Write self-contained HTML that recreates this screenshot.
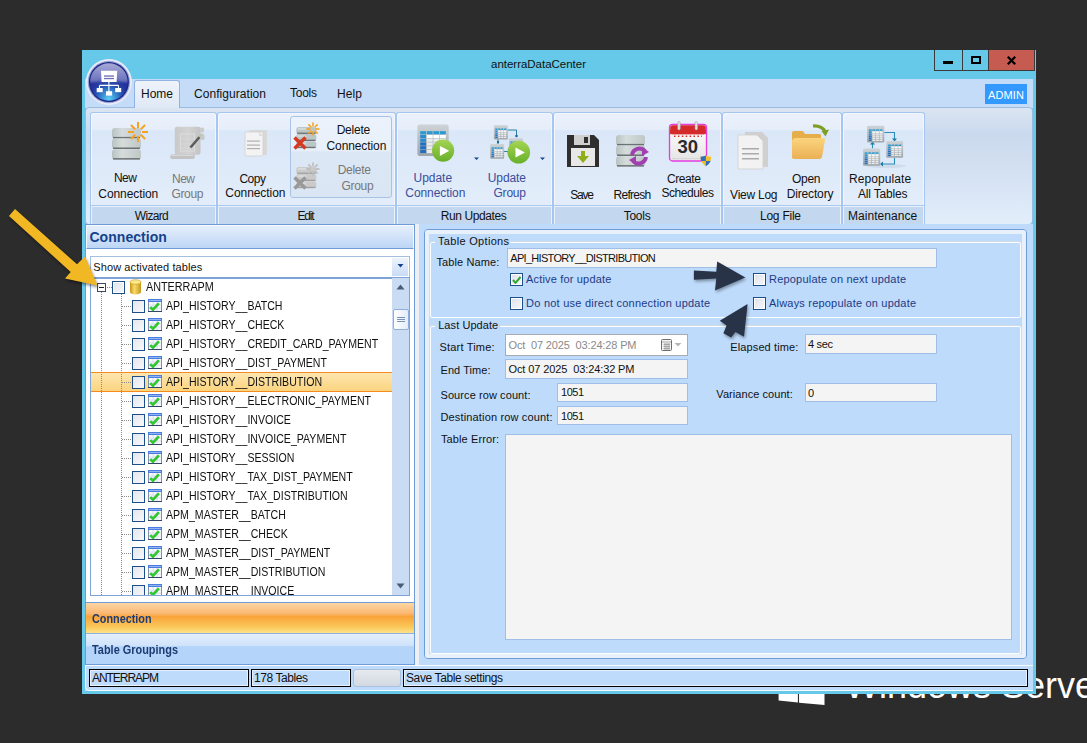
<!DOCTYPE html><html><head><meta charset="utf-8"><style>
html,body{margin:0;padding:0;width:1087px;height:743px;overflow:hidden;background:#2c2c2c;}
body{position:relative;font-family:"Liberation Sans",sans-serif;}
.t{position:absolute;white-space:pre;font-family:"Liberation Sans",sans-serif;}
</style></head><body>
<svg style="position:absolute;left:770px;top:680px;" width="60" height="30" viewBox="0 0 60 30"><polygon points="8.6,0 27.9,0 27.9,22.6 8.6,20.4" fill="#fff"/><polygon points="29,0 54.5,0 54.5,24.9 29,22.8" fill="#fff"/></svg>
<div class="t" style="left:845px;top:668px;font-size:36px;line-height:36px;color:#fff;">Windows Server</div>
<div style="position:absolute;left:82px;top:50px;width:954px;height:644px;background:#66c9e9;"></div>
<div class="t" style="left:491px;top:59px;font-size:11.5px;line-height:11.5px;color:#111;letter-spacing:-0.016px;">anterraDataCenter</div>
<div style="position:absolute;left:934px;top:50px;width:29px;height:21px;background:#66c9e9;border:1px solid #3b3b3b;border-top:none;box-sizing:border-box;"></div>
<div style="position:absolute;left:963px;top:50px;width:26px;height:21px;background:#66c9e9;border:1px solid #3b3b3b;border-top:none;border-left:none;box-sizing:border-box;"></div>
<div style="position:absolute;left:989px;top:50px;width:46px;height:21px;background:#c65c51;border:1px solid #3b3b3b;border-top:none;border-left:none;box-sizing:border-box;"></div>
<div style="position:absolute;left:943px;top:61px;width:10px;height:3px;background:#000;"></div>
<div style="position:absolute;left:971px;top:56px;width:10px;height:8px;border:2px solid #000;box-sizing:border-box;"></div>
<svg style="position:absolute;left:1006px;top:56px;" width="11" height="9" viewBox="0 0 11 9"><path d="M1.8,0.8 L9.2,8.2 M9.2,0.8 L1.8,8.2" stroke="#000" stroke-width="2.3"/></svg>
<div style="position:absolute;left:85px;top:79px;width:948px;height:29px;background:#c4dcf8;"></div>
<div style="position:absolute;left:85px;top:107px;width:948px;height:118px;background:linear-gradient(#dbe5f2 0%,#cad9ed 22%,#d5e2f3 60%,#e3eefb 100%);border:1px solid #9cbbe2;border-radius:4px;box-sizing:border-box;"></div>
<svg style="position:absolute;left:82px;top:52px;" width="56" height="56" viewBox="0 0 56 56"><defs><radialGradient id="og" cx="50%" cy="95%" r="60%"><stop offset="0" stop-color="#5cd0f5"/><stop offset="0.5" stop-color="#2a6ac0"/><stop offset="1" stop-color="#22309a" stop-opacity="0"/></radialGradient>
<linearGradient id="ogt" x1="0" y1="0" x2="0" y2="1"><stop offset="0" stop-color="#a7aad6"/><stop offset="0.45" stop-color="#6d74bd"/><stop offset="0.55" stop-color="#25339c"/><stop offset="1" stop-color="#1f2e96"/></linearGradient></defs>
<circle cx="26.9" cy="30" r="23" fill="#e8ecf7"/>
<circle cx="26.9" cy="30" r="21.2" fill="#9aa3d6"/>
<circle cx="26.9" cy="30" r="20" fill="#1b2585"/>
<circle cx="26.9" cy="30" r="18.8" fill="url(#ogt)"/>
<circle cx="26.9" cy="30" r="18.8" fill="url(#og)"/>
<path d="M19,18.8 H35.2 L34.6,30.1 H19.6 Z" fill="#fff"/>
<rect x="22" y="23.4" width="10" height="1.3" fill="#6d6db8"/><rect x="22" y="25.9" width="10" height="1.3" fill="#6d6db8"/>
<path d="M26.9,30 V39.5 M17.5,33.4 H36.5 M17.5,33.4 V36.5 M36.5,33.4 V36.5" stroke="#fff" stroke-width="1.1" fill="none"/>
<rect x="14.7" y="36" width="6" height="4.2" fill="#fff"/><rect x="33.2" y="36" width="6" height="4.2" fill="#fff"/><rect x="24" y="39.2" width="6.1" height="4.4" fill="#fff"/></svg>
<div style="position:absolute;left:134px;top:80px;width:46px;height:28px;box-sizing:border-box;border:1px solid #8fb2e0;border-bottom:none;border-radius:3px 3px 0 0;background:linear-gradient(#eef3fb,#dfe9f6);"></div>
<div class="t" style="left:141px;top:88px;font-size:12px;line-height:12px;color:#111;">Home</div>
<div class="t" style="left:194px;top:88px;font-size:12px;line-height:12px;color:#111;letter-spacing:0.052px;">Configuration</div>
<div class="t" style="left:290px;top:87px;font-size:12px;line-height:12px;color:#111;letter-spacing:-0.254px;">Tools</div>
<div class="t" style="left:337px;top:88px;font-size:12px;line-height:12px;color:#111;letter-spacing:0.106px;">Help</div>
<div style="position:absolute;left:985px;top:84px;width:42px;height:20px;background:#3399ff;"></div>
<div class="t" style="left:988px;top:90px;font-size:11px;line-height:11px;color:#fff;letter-spacing:0.139px;">ADMIN</div>
<div style="position:absolute;left:90px;top:112px;width:127px;height:112px;box-sizing:border-box;border:1px solid #a4c6f0;border-bottom:none;border-radius:3px 3px 0 0;box-shadow:inset 1px 1px 0 #f3f7fd, inset -1px 0 0 #f3f7fd;background:linear-gradient(#eaf1fc 0px,#e6eefa 16px,#dae7f8 18px,#e3edfa 92px);"></div>
<div style="position:absolute;left:91px;top:205px;width:125px;height:19px;background:#c3d8ef;border-top:1px solid #a9c8f0;box-shadow:inset 1px 1px 0 #e9f1fb, inset -1px 0 0 #e9f1fb;box-sizing:border-box;"></div>
<div class="t" style="left:134.8px;top:210px;font-size:12px;line-height:12px;color:#111;letter-spacing:-0.667px;">Wizard</div>
<div style="position:absolute;left:217px;top:112px;width:179px;height:112px;box-sizing:border-box;border:1px solid #a4c6f0;border-bottom:none;border-radius:3px 3px 0 0;box-shadow:inset 1px 1px 0 #f3f7fd, inset -1px 0 0 #f3f7fd;background:linear-gradient(#eaf1fc 0px,#e6eefa 16px,#dae7f8 18px,#e3edfa 92px);"></div>
<div style="position:absolute;left:218px;top:205px;width:177px;height:19px;background:#c3d8ef;border-top:1px solid #a9c8f0;box-shadow:inset 1px 1px 0 #e9f1fb, inset -1px 0 0 #e9f1fb;box-sizing:border-box;"></div>
<div class="t" style="left:297.5px;top:210px;font-size:12px;line-height:12px;color:#111;letter-spacing:-1.226px;">Edit</div>
<div style="position:absolute;left:396px;top:112px;width:157px;height:112px;box-sizing:border-box;border:1px solid #a4c6f0;border-bottom:none;border-radius:3px 3px 0 0;box-shadow:inset 1px 1px 0 #f3f7fd, inset -1px 0 0 #f3f7fd;background:linear-gradient(#eaf1fc 0px,#e6eefa 16px,#dae7f8 18px,#e3edfa 92px);"></div>
<div style="position:absolute;left:397px;top:205px;width:155px;height:19px;background:#c3d8ef;border-top:1px solid #a9c8f0;box-shadow:inset 1px 1px 0 #e9f1fb, inset -1px 0 0 #e9f1fb;box-sizing:border-box;"></div>
<div class="t" style="left:440.7px;top:210px;font-size:12px;line-height:12px;color:#111;letter-spacing:-0.404px;">Run Updates</div>
<div style="position:absolute;left:553px;top:112px;width:169px;height:112px;box-sizing:border-box;border:1px solid #a4c6f0;border-bottom:none;border-radius:3px 3px 0 0;box-shadow:inset 1px 1px 0 #f3f7fd, inset -1px 0 0 #f3f7fd;background:linear-gradient(#eaf1fc 0px,#e6eefa 16px,#dae7f8 18px,#e3edfa 92px);"></div>
<div style="position:absolute;left:554px;top:205px;width:167px;height:19px;background:#c3d8ef;border-top:1px solid #a9c8f0;box-shadow:inset 1px 1px 0 #e9f1fb, inset -1px 0 0 #e9f1fb;box-sizing:border-box;"></div>
<div class="t" style="left:623.7px;top:210px;font-size:12px;line-height:12px;color:#111;letter-spacing:-0.254px;">Tools</div>
<div style="position:absolute;left:722px;top:112px;width:120px;height:112px;box-sizing:border-box;border:1px solid #a4c6f0;border-bottom:none;border-radius:3px 3px 0 0;box-shadow:inset 1px 1px 0 #f3f7fd, inset -1px 0 0 #f3f7fd;background:linear-gradient(#eaf1fc 0px,#e6eefa 16px,#dae7f8 18px,#e3edfa 92px);"></div>
<div style="position:absolute;left:723px;top:205px;width:118px;height:19px;background:#c3d8ef;border-top:1px solid #a9c8f0;box-shadow:inset 1px 1px 0 #e9f1fb, inset -1px 0 0 #e9f1fb;box-sizing:border-box;"></div>
<div class="t" style="left:760.0px;top:210px;font-size:12px;line-height:12px;color:#111;letter-spacing:-0.242px;">Log File</div>
<div style="position:absolute;left:842px;top:112px;width:83px;height:112px;box-sizing:border-box;border:1px solid #a4c6f0;border-bottom:none;border-radius:3px 3px 0 0;box-shadow:inset 1px 1px 0 #f3f7fd, inset -1px 0 0 #f3f7fd;background:linear-gradient(#eaf1fc 0px,#e6eefa 16px,#dae7f8 18px,#e3edfa 92px);"></div>
<div style="position:absolute;left:843px;top:205px;width:81px;height:19px;background:#c3d8ef;border-top:1px solid #a9c8f0;box-shadow:inset 1px 1px 0 #e9f1fb, inset -1px 0 0 #e9f1fb;box-sizing:border-box;"></div>
<div class="t" style="left:848.1px;top:210px;font-size:12px;line-height:12px;color:#111;letter-spacing:0.028px;">Maintenance</div>
<svg style="position:absolute;left:112px;top:127.5px;" width="29" height="32" viewBox="0 0 29 32"><defs><linearGradient id="dbg1" x1="0" y1="0" x2="1" y2="0"><stop offset="0" stop-color="#b9c2c2"/><stop offset="0.35" stop-color="#d6dcdc"/><stop offset="1" stop-color="#bfc7c7"/></linearGradient></defs><rect x="0" y="0.00" width="29" height="10.4" rx="3" fill="url(#dbg1)"/><rect x="1" y="8.90" width="27" height="1.5" fill="#5a6262" opacity="0.85"/><rect x="0" y="10.60" width="29" height="10.4" rx="3" fill="url(#dbg1)"/><rect x="1" y="19.50" width="27" height="1.5" fill="#5a6262" opacity="0.85"/><rect x="0" y="21.20" width="29" height="10.4" rx="3" fill="url(#dbg1)"/><rect x="1" y="30.10" width="27" height="1.5" fill="#5a6262" opacity="0.85"/></svg>
<svg style="position:absolute;left:126px;top:120px;" width="24" height="24" viewBox="0 0 24 24"><line x1="16.00" y1="12.00" x2="22.00" y2="12.00" stroke="#f7a21b" stroke-width="2"/><line x1="14.83" y1="14.83" x2="19.07" y2="19.07" stroke="#f7a21b" stroke-width="2"/><line x1="12.00" y1="16.00" x2="12.00" y2="22.00" stroke="#f7a21b" stroke-width="2"/><line x1="9.17" y1="14.83" x2="4.93" y2="19.07" stroke="#f7a21b" stroke-width="2"/><line x1="8.00" y1="12.00" x2="2.00" y2="12.00" stroke="#f7a21b" stroke-width="2"/><line x1="9.17" y1="9.17" x2="4.93" y2="4.93" stroke="#f7a21b" stroke-width="2"/><line x1="12.00" y1="8.00" x2="12.00" y2="2.00" stroke="#f7a21b" stroke-width="2"/><line x1="14.83" y1="9.17" x2="19.07" y2="4.93" stroke="#f7a21b" stroke-width="2"/></svg>
<svg style="position:absolute;left:168px;top:124px;" width="40" height="38" viewBox="0 0 40 38"><defs><linearGradient id="ngb" x1="0" y1="0" x2="1" y2="0"><stop offset="0" stop-color="#c9c9c9"/><stop offset="0.5" stop-color="#d3d3d3"/><stop offset="1" stop-color="#c4c4c4"/></linearGradient></defs>
<rect x="6.8" y="2.8" width="25.7" height="28" rx="2" fill="url(#ngb)"/>
<rect x="32" y="3.5" width="4" height="5" rx="1.5" fill="#cbcbcb"/><rect x="32.5" y="10" width="4" height="6" rx="1.5" fill="#c8c8c8"/>
<rect x="2.2" y="30.3" width="24.7" height="4.6" rx="2" fill="#c3c3c3"/><rect x="3" y="30.8" width="22" height="1.2" fill="#d8d8d8"/>
<rect x="12.5" y="10" width="14" height="17" fill="none" stroke="#dcdcdc" stroke-width="1"/><path d="M13,15 H26 M13,20 H26 M13,24 H26" stroke="#d8d8d8" stroke-width="1"/>
<path d="M22.5,23.5 L31.5,13" stroke="#5c5c5c" stroke-width="2.6"/><path d="M31.5,13 L34,10" stroke="#b9c9b0" stroke-width="2.4"/></svg>
<div class="t" style="left:113.9px;top:172px;font-size:12px;line-height:12px;color:#111;letter-spacing:-0.503px;">New</div>
<div class="t" style="left:98.3px;top:187.6px;font-size:12px;line-height:12px;color:#111;letter-spacing:-0.079px;">Connection</div>
<div class="t" style="left:172px;top:172.8px;font-size:12px;line-height:12px;color:#777;letter-spacing:-0.503px;">New</div>
<div class="t" style="left:171.4px;top:187.9px;font-size:12px;line-height:12px;color:#777;letter-spacing:-0.338px;">Group</div>
<svg style="position:absolute;left:244px;top:129px;" width="24" height="28" viewBox="0 0 24 28"><rect x="5" y="1" width="18" height="25" rx="1" fill="#d8d8d8"/>
<rect x="1" y="3" width="18" height="24" rx="1" fill="#f3f3f3" stroke="#d0d0d0" stroke-width="0.8"/>
<rect x="3" y="11.5" width="13" height="1.2" fill="#b0b0b0"/><rect x="3" y="15.5" width="13" height="1.2" fill="#b0b0b0"/><rect x="3" y="19" width="13" height="1.2" fill="#b0b0b0"/><path d="M15,3 L19,7 H15 Z" fill="#dcdcdc"/></svg>
<div class="t" style="left:239.4px;top:172.9px;font-size:12px;line-height:12px;color:#111;letter-spacing:-0.471px;">Copy</div>
<div class="t" style="left:225.3px;top:187.3px;font-size:12px;line-height:12px;color:#111;letter-spacing:-0.057px;">Connection</div>
<div style="position:absolute;left:290px;top:116px;width:102px;height:82px;box-sizing:border-box;border:1px solid #a9c3e6;border-radius:3px;background:linear-gradient(#ebf2fb 0px,#e8f0fa 33px,#dce7f6 35px,#dbe6f5 80px);"></div>
<svg style="position:absolute;left:292px;top:122px;" width="30" height="30" viewBox="0 0 30 30"><rect x="4.3" y="5.00" width="20" height="7" rx="2.5" fill="#bcc6c6"/><rect x="5" y="10.60" width="18.6" height="1.3" fill="#5d6666" opacity="0.85"/><rect x="6" y="6.00" width="8" height="2" fill="#e0e5e5" opacity="0.6"/><rect x="4.3" y="12.10" width="20" height="7" rx="2.5" fill="#bcc6c6"/><rect x="5" y="17.70" width="18.6" height="1.3" fill="#5d6666" opacity="0.85"/><rect x="6" y="13.10" width="8" height="2" fill="#e0e5e5" opacity="0.6"/><rect x="4.3" y="19.20" width="20" height="7" rx="2.5" fill="#bcc6c6"/><rect x="5" y="24.80" width="18.6" height="1.3" fill="#5d6666" opacity="0.85"/><rect x="6" y="20.20" width="8" height="2" fill="#e0e5e5" opacity="0.6"/><line x1="23.50" y1="7.00" x2="27.50" y2="7.00" stroke="#f7a21b" stroke-width="1.6"/><line x1="22.77" y1="8.77" x2="25.60" y2="11.60" stroke="#f7a21b" stroke-width="1.6"/><line x1="21.00" y1="9.50" x2="21.00" y2="13.50" stroke="#f7a21b" stroke-width="1.6"/><line x1="19.23" y1="8.77" x2="16.40" y2="11.60" stroke="#f7a21b" stroke-width="1.6"/><line x1="18.50" y1="7.00" x2="14.50" y2="7.00" stroke="#f7a21b" stroke-width="1.6"/><line x1="19.23" y1="5.23" x2="16.40" y2="2.40" stroke="#f7a21b" stroke-width="1.6"/><line x1="21.00" y1="4.50" x2="21.00" y2="0.50" stroke="#f7a21b" stroke-width="1.6"/><line x1="22.77" y1="5.23" x2="25.60" y2="2.40" stroke="#f7a21b" stroke-width="1.6"/><path d="M2.5,15.5 L13.5,26.5 M13.5,15.5 L2.5,26.5" stroke="#d63a22" stroke-width="3.4"/></svg>
<svg style="position:absolute;left:292px;top:162px;" width="30" height="30" viewBox="0 0 30 30"><rect x="4.3" y="5.00" width="20" height="7" rx="2.5" fill="#cacaca"/><rect x="5" y="10.60" width="18.6" height="1.3" fill="#9a9a9a" opacity="0.85"/><rect x="6" y="6.00" width="8" height="2" fill="#e0e5e5" opacity="0.6"/><rect x="4.3" y="12.10" width="20" height="7" rx="2.5" fill="#cacaca"/><rect x="5" y="17.70" width="18.6" height="1.3" fill="#9a9a9a" opacity="0.85"/><rect x="6" y="13.10" width="8" height="2" fill="#e0e5e5" opacity="0.6"/><rect x="4.3" y="19.20" width="20" height="7" rx="2.5" fill="#cacaca"/><rect x="5" y="24.80" width="18.6" height="1.3" fill="#9a9a9a" opacity="0.85"/><rect x="6" y="20.20" width="8" height="2" fill="#e0e5e5" opacity="0.6"/><line x1="23.50" y1="7.00" x2="27.50" y2="7.00" stroke="#bbb" stroke-width="1.6"/><line x1="22.77" y1="8.77" x2="25.60" y2="11.60" stroke="#bbb" stroke-width="1.6"/><line x1="21.00" y1="9.50" x2="21.00" y2="13.50" stroke="#bbb" stroke-width="1.6"/><line x1="19.23" y1="8.77" x2="16.40" y2="11.60" stroke="#bbb" stroke-width="1.6"/><line x1="18.50" y1="7.00" x2="14.50" y2="7.00" stroke="#bbb" stroke-width="1.6"/><line x1="19.23" y1="5.23" x2="16.40" y2="2.40" stroke="#bbb" stroke-width="1.6"/><line x1="21.00" y1="4.50" x2="21.00" y2="0.50" stroke="#bbb" stroke-width="1.6"/><line x1="22.77" y1="5.23" x2="25.60" y2="2.40" stroke="#bbb" stroke-width="1.6"/><path d="M2.5,15.5 L13.5,26.5 M13.5,15.5 L2.5,26.5" stroke="#999" stroke-width="3.4"/></svg>
<div class="t" style="left:336.7px;top:123.69999999999999px;font-size:12px;line-height:12px;color:#111;letter-spacing:-0.238px;">Delete</div>
<div class="t" style="left:326.5px;top:139.8px;font-size:12px;line-height:12px;color:#111;letter-spacing:-0.101px;">Connection</div>
<div class="t" style="left:337.7px;top:164px;font-size:12px;line-height:12px;color:#777;letter-spacing:-0.278px;">Delete</div>
<div class="t" style="left:341.4px;top:179.7px;font-size:12px;line-height:12px;color:#777;letter-spacing:-0.288px;">Group</div>
<svg style="position:absolute;left:414px;top:120px;" width="50" height="46" viewBox="0 0 50 46"><defs><linearGradient id="tg1" x1="0" y1="0" x2="0" y2="1"><stop offset="0" stop-color="#cdd3d7"/><stop offset="1" stop-color="#9ea6ab"/></linearGradient></defs><rect x="3.4" y="4.6" width="31.3" height="31.3" rx="2.24" fill="url(#tg1)"/><rect x="6.20" y="11.16" width="5.87" height="3.16" fill="#2a9ad0"/><rect x="12.78" y="11.16" width="5.87" height="3.16" fill="#2a9ad0"/><rect x="19.35" y="11.16" width="5.87" height="3.16" fill="#2a9ad0"/><rect x="25.92" y="11.16" width="5.87" height="3.16" fill="#2a9ad0"/><rect x="6.20" y="14.92" width="5.87" height="3.16" fill="#2a8ccc"/><rect x="12.78" y="14.92" width="5.87" height="3.16" fill="#ffffff"/><rect x="19.35" y="14.92" width="5.87" height="3.16" fill="#ffffff"/><rect x="25.92" y="14.92" width="5.87" height="3.16" fill="#ffffff"/><rect x="6.20" y="18.67" width="5.87" height="3.16" fill="#2a8ccc"/><rect x="12.78" y="18.67" width="5.87" height="3.16" fill="#e9ebec"/><rect x="19.35" y="18.67" width="5.87" height="3.16" fill="#e9ebec"/><rect x="25.92" y="18.67" width="5.87" height="3.16" fill="#e9ebec"/><rect x="6.20" y="22.43" width="5.87" height="3.16" fill="#1f6fc2"/><rect x="12.78" y="22.43" width="5.87" height="3.16" fill="#e9ebec"/><rect x="19.35" y="22.43" width="5.87" height="3.16" fill="#e9ebec"/><rect x="25.92" y="22.43" width="5.87" height="3.16" fill="#e9ebec"/><rect x="6.20" y="26.18" width="5.87" height="3.16" fill="#1f6fc2"/><rect x="12.78" y="26.18" width="5.87" height="3.16" fill="#e9ebec"/><rect x="19.35" y="26.18" width="5.87" height="3.16" fill="#e9ebec"/><rect x="25.92" y="26.18" width="5.87" height="3.16" fill="#e9ebec"/><rect x="6.20" y="29.94" width="5.87" height="3.16" fill="#1f6fc2"/><rect x="12.78" y="29.94" width="5.87" height="3.16" fill="#e9ebec"/><rect x="19.35" y="29.94" width="5.87" height="3.16" fill="#e9ebec"/><rect x="25.92" y="29.94" width="5.87" height="3.16" fill="#e9ebec"/><defs><linearGradient id="pg1" x1="0" y1="0" x2="0" y2="1"><stop offset="0" stop-color="#a3d452"/><stop offset="1" stop-color="#68b02a"/></linearGradient></defs><circle cx="29.1" cy="30.6" r="11.1" fill="url(#pg1)"/><polygon points="25.900000000000002,26.0 35.300000000000004,30.8 25.900000000000002,35.9" fill="#fff"/></svg>
<svg style="position:absolute;left:470px;top:156px;" width="12" height="6" viewBox="0 0 12 6"><polygon points="4,1.5 9,1.5 6.5,4" fill="#15428b"/></svg>
<svg style="position:absolute;left:484px;top:120px;" width="50" height="46" viewBox="0 0 50 46"><path d="M23,10 H32.5 V16 M14,19 V24 M20,31.5 H26" stroke="#2b7fa6" stroke-width="1" fill="none"/><circle cx="32.5" cy="16" r="1.3" fill="#1d6c8e"/><circle cx="14" cy="22" r="1.2" fill="#1d6c8e"/><defs><linearGradient id="tg2" x1="0" y1="0" x2="0" y2="1"><stop offset="0" stop-color="#cdd3d7"/><stop offset="1" stop-color="#9ea6ab"/></linearGradient></defs><rect x="9.9" y="5.3" width="13.9" height="14.2" rx="1.00" fill="url(#tg2)"/><rect x="11.31" y="8.44" width="2.22" height="1.44" fill="#2a9ad0"/><rect x="14.23" y="8.44" width="2.22" height="1.44" fill="#2a9ad0"/><rect x="17.15" y="8.44" width="2.22" height="1.44" fill="#2a9ad0"/><rect x="20.07" y="8.44" width="2.22" height="1.44" fill="#2a9ad0"/><rect x="11.31" y="10.48" width="2.22" height="1.44" fill="#2a8ccc"/><rect x="14.23" y="10.48" width="2.22" height="1.44" fill="#ffffff"/><rect x="17.15" y="10.48" width="2.22" height="1.44" fill="#ffffff"/><rect x="20.07" y="10.48" width="2.22" height="1.44" fill="#ffffff"/><rect x="11.31" y="12.53" width="2.22" height="1.44" fill="#2a8ccc"/><rect x="14.23" y="12.53" width="2.22" height="1.44" fill="#e9ebec"/><rect x="17.15" y="12.53" width="2.22" height="1.44" fill="#e9ebec"/><rect x="20.07" y="12.53" width="2.22" height="1.44" fill="#e9ebec"/><rect x="11.31" y="14.57" width="2.22" height="1.44" fill="#1f6fc2"/><rect x="14.23" y="14.57" width="2.22" height="1.44" fill="#e9ebec"/><rect x="17.15" y="14.57" width="2.22" height="1.44" fill="#e9ebec"/><rect x="20.07" y="14.57" width="2.22" height="1.44" fill="#e9ebec"/><rect x="11.31" y="16.62" width="2.22" height="1.44" fill="#1f6fc2"/><rect x="14.23" y="16.62" width="2.22" height="1.44" fill="#e9ebec"/><rect x="17.15" y="16.62" width="2.22" height="1.44" fill="#e9ebec"/><rect x="20.07" y="16.62" width="2.22" height="1.44" fill="#e9ebec"/><defs><linearGradient id="tg3" x1="0" y1="0" x2="0" y2="1"><stop offset="0" stop-color="#cdd3d7"/><stop offset="1" stop-color="#9ea6ab"/></linearGradient></defs><rect x="6.2" y="24.1" width="13.9" height="14.6" rx="1.00" fill="url(#tg3)"/><rect x="7.61" y="27.32" width="2.22" height="1.50" fill="#2a9ad0"/><rect x="10.53" y="27.32" width="2.22" height="1.50" fill="#2a9ad0"/><rect x="13.45" y="27.32" width="2.22" height="1.50" fill="#2a9ad0"/><rect x="16.37" y="27.32" width="2.22" height="1.50" fill="#2a9ad0"/><rect x="7.61" y="29.42" width="2.22" height="1.50" fill="#2a8ccc"/><rect x="10.53" y="29.42" width="2.22" height="1.50" fill="#ffffff"/><rect x="13.45" y="29.42" width="2.22" height="1.50" fill="#ffffff"/><rect x="16.37" y="29.42" width="2.22" height="1.50" fill="#ffffff"/><rect x="7.61" y="31.52" width="2.22" height="1.50" fill="#2a8ccc"/><rect x="10.53" y="31.52" width="2.22" height="1.50" fill="#e9ebec"/><rect x="13.45" y="31.52" width="2.22" height="1.50" fill="#e9ebec"/><rect x="16.37" y="31.52" width="2.22" height="1.50" fill="#e9ebec"/><rect x="7.61" y="33.63" width="2.22" height="1.50" fill="#1f6fc2"/><rect x="10.53" y="33.63" width="2.22" height="1.50" fill="#e9ebec"/><rect x="13.45" y="33.63" width="2.22" height="1.50" fill="#e9ebec"/><rect x="16.37" y="33.63" width="2.22" height="1.50" fill="#e9ebec"/><rect x="7.61" y="35.73" width="2.22" height="1.50" fill="#1f6fc2"/><rect x="10.53" y="35.73" width="2.22" height="1.50" fill="#e9ebec"/><rect x="13.45" y="35.73" width="2.22" height="1.50" fill="#e9ebec"/><rect x="16.37" y="35.73" width="2.22" height="1.50" fill="#e9ebec"/><defs><linearGradient id="tg4" x1="0" y1="0" x2="0" y2="1"><stop offset="0" stop-color="#cdd3d7"/><stop offset="1" stop-color="#9ea6ab"/></linearGradient></defs><rect x="25" y="18.3" width="14" height="14" rx="1.00" fill="url(#tg4)"/><rect x="26.42" y="21.40" width="2.24" height="1.42" fill="#2a9ad0"/><rect x="29.36" y="21.40" width="2.24" height="1.42" fill="#2a9ad0"/><rect x="32.30" y="21.40" width="2.24" height="1.42" fill="#2a9ad0"/><rect x="35.24" y="21.40" width="2.24" height="1.42" fill="#2a9ad0"/><rect x="26.42" y="23.42" width="2.24" height="1.42" fill="#2a8ccc"/><rect x="29.36" y="23.42" width="2.24" height="1.42" fill="#ffffff"/><rect x="32.30" y="23.42" width="2.24" height="1.42" fill="#ffffff"/><rect x="35.24" y="23.42" width="2.24" height="1.42" fill="#ffffff"/><rect x="26.42" y="25.43" width="2.24" height="1.42" fill="#2a8ccc"/><rect x="29.36" y="25.43" width="2.24" height="1.42" fill="#e9ebec"/><rect x="32.30" y="25.43" width="2.24" height="1.42" fill="#e9ebec"/><rect x="35.24" y="25.43" width="2.24" height="1.42" fill="#e9ebec"/><rect x="26.42" y="27.45" width="2.24" height="1.42" fill="#1f6fc2"/><rect x="29.36" y="27.45" width="2.24" height="1.42" fill="#e9ebec"/><rect x="32.30" y="27.45" width="2.24" height="1.42" fill="#e9ebec"/><rect x="35.24" y="27.45" width="2.24" height="1.42" fill="#e9ebec"/><rect x="26.42" y="29.46" width="2.24" height="1.42" fill="#1f6fc2"/><rect x="29.36" y="29.46" width="2.24" height="1.42" fill="#e9ebec"/><rect x="32.30" y="29.46" width="2.24" height="1.42" fill="#e9ebec"/><rect x="35.24" y="29.46" width="2.24" height="1.42" fill="#e9ebec"/><defs><linearGradient id="pg2" x1="0" y1="0" x2="0" y2="1"><stop offset="0" stop-color="#a3d452"/><stop offset="1" stop-color="#68b02a"/></linearGradient></defs><circle cx="34.7" cy="32.2" r="11.4" fill="url(#pg2)"/><polygon points="31.500000000000004,27.6 40.900000000000006,32.400000000000006 31.500000000000004,37.5" fill="#fff"/></svg>
<svg style="position:absolute;left:537px;top:156px;" width="12" height="6" viewBox="0 0 12 6"><polygon points="3,1.5 8,1.5 5.5,4" fill="#15428b"/></svg>
<div class="t" style="left:413.5px;top:171.9px;font-size:12px;line-height:12px;color:#3a4d9b;letter-spacing:-0.019px;">Update</div>
<div class="t" style="left:405.3px;top:186.7px;font-size:12px;line-height:12px;color:#3a4d9b;letter-spacing:-0.068px;">Connection</div>
<div class="t" style="left:487.8px;top:171.9px;font-size:12px;line-height:12px;color:#3a4d9b;letter-spacing:-0.099px;">Update</div>
<div class="t" style="left:493.5px;top:186.7px;font-size:12px;line-height:12px;color:#3a4d9b;letter-spacing:-0.213px;">Group</div>
<svg style="position:absolute;left:566px;top:134px;" width="34" height="34" viewBox="0 0 34 34"><path d="M1,1 H28 L33,6 V33 H1 Z" fill="#2f2f2f"/>
<rect x="8" y="1" width="16" height="10" fill="#cfcfcf"/><rect x="18" y="3" width="4" height="6" fill="#2f2f2f"/>
<rect x="5" y="14" width="24" height="18" fill="#e8e8e8"/>
<path d="M15,17 H19 V22 H23 L17,29 L11,22 H15 Z" fill="#8fae1b"/></svg>
<svg style="position:absolute;left:616px;top:135px;" width="29" height="32" viewBox="0 0 29 32"><defs><linearGradient id="dbg2" x1="0" y1="0" x2="1" y2="0"><stop offset="0" stop-color="#b9c2c2"/><stop offset="0.35" stop-color="#d6dcdc"/><stop offset="1" stop-color="#bfc7c7"/></linearGradient></defs><rect x="0" y="0.00" width="29" height="10.4" rx="3" fill="url(#dbg2)"/><rect x="1" y="8.90" width="27" height="1.5" fill="#5a6262" opacity="0.85"/><rect x="0" y="10.60" width="29" height="10.4" rx="3" fill="url(#dbg2)"/><rect x="1" y="19.50" width="27" height="1.5" fill="#5a6262" opacity="0.85"/><rect x="0" y="21.20" width="29" height="10.4" rx="3" fill="url(#dbg2)"/><rect x="1" y="30.10" width="27" height="1.5" fill="#5a6262" opacity="0.85"/></svg>
<svg style="position:absolute;left:628px;top:145px;" width="22" height="22" viewBox="0 0 22 22"><path d="M4,10 A7.5,7.5 0 0 1 17,6" stroke="#a140b0" stroke-width="4" fill="none"/><polygon points="14,2 21,7 14,11" fill="#a140b0"/>
<path d="M18,12 A7.5,7.5 0 0 1 5,16" stroke="#a140b0" stroke-width="4" fill="none"/><polygon points="8,20 1,15 8,11" fill="#a140b0"/></svg>
<svg style="position:absolute;left:668px;top:121px;" width="45" height="46" viewBox="0 0 45 46"><defs><linearGradient id="calb" x1="0" y1="0" x2="0" y2="1"><stop offset="0" stop-color="#ffffff"/><stop offset="1" stop-color="#e4e4e4"/></linearGradient></defs>
<rect x="1.5" y="3.5" width="37" height="36.5" rx="3" fill="url(#calb)" stroke="#e53be0" stroke-width="1.3"/>
<rect x="2.2" y="4.2" width="35.6" height="9" rx="2.5" fill="#d42a2a"/><rect x="2.2" y="9" width="35.6" height="4.2" fill="#d42a2a"/>
<line x1="6" y1="15.2" x2="34" y2="15.2" stroke="#d42a2a" stroke-width="1.4" stroke-dasharray="1.5 2.4"/>
<rect x="9.7" y="0.5" width="2.6" height="8.5" rx="1.3" fill="#e2e2e2" stroke="#9a9a9a" stroke-width="0.5"/><rect x="27" y="0.5" width="2.6" height="8.5" rx="1.3" fill="#e2e2e2" stroke="#9a9a9a" stroke-width="0.5"/>
<text x="19.8" y="32.2" font-family="Liberation Sans" font-weight="bold" font-size="18.5" text-anchor="middle" fill="#2b2b2b">30</text>
<line x1="4" y1="37.6" x2="36" y2="37.6" stroke="#cfcfcf" stroke-width="0.8"/>
<path d="M37.8,34.6 Q40.5,36 43,35.6 Q43.5,42 37.8,45.2 Q32.1,42 32.6,35.6 Q35.1,36 37.8,34.6 Z" fill="#f2bf2f"/>
<path d="M37.8,34.6 Q35.1,36 32.6,35.6 Q32.6,38.5 33.2,40 H37.8 Z M37.8,40 V45.2 Q41.5,43.2 42.6,40 Z" fill="#2a6fc0"/></svg>
<div class="t" style="left:570.2px;top:188.7px;font-size:12px;line-height:12px;color:#111;letter-spacing:-1.184px;">Save</div>
<div class="t" style="left:613.5px;top:188.7px;font-size:12px;line-height:12px;color:#111;letter-spacing:-0.720px;">Refresh</div>
<div class="t" style="left:666.9px;top:172.9px;font-size:12px;line-height:12px;color:#111;letter-spacing:-0.404px;">Create</div>
<div class="t" style="left:661.4px;top:187.4px;font-size:12px;line-height:12px;color:#111;letter-spacing:-0.443px;">Schedules</div>
<svg style="position:absolute;left:737px;top:131px;" width="33" height="39" viewBox="0 0 33 39"><path d="M8,1 H25 L31,7 V36 H8 Z" fill="#d0d0d0"/>
<path d="M1,4 H20 L26,10 V38 H1 Z" fill="#f2f2f2" stroke="#cfcfcf" stroke-width="0.8"/>
<rect x="5" y="17" width="17" height="1.5" fill="#aaa"/><rect x="5" y="22" width="17" height="1.5" fill="#aaa"/><rect x="5" y="27" width="17" height="1.5" fill="#aaa"/></svg>
<svg style="position:absolute;left:788px;top:120px;" width="44" height="44" viewBox="0 0 44 44"><defs><linearGradient id="fold" x1="0" y1="0" x2="0" y2="1"><stop offset="0" stop-color="#fbd47e"/><stop offset="1" stop-color="#eab055"/></linearGradient></defs>
<path d="M4,13 Q4,11 6,11 H15 L17,14 H32 Q33,14 33,16 V38 H4 Z" fill="#e6ad4b"/>
<path d="M8,18 H36 Q37.5,18 37,20 L34,37 Q33.5,39 31,39 H6 Q4,39 4,37 V22 Q4,18 8,18 Z" fill="url(#fold)"/>
<path d="M25,6 Q34,5.5 37.5,12" stroke="#7e9e25" stroke-width="3.2" fill="none"/><polygon points="33.5,11 41,9.5 37.5,16.5" fill="#7e9e25"/></svg>
<div class="t" style="left:730.1px;top:188.7px;font-size:12px;line-height:12px;color:#111;letter-spacing:-0.250px;">View Log</div>
<div class="t" style="left:792.1px;top:173.1px;font-size:12px;line-height:12px;color:#111;letter-spacing:-0.352px;">Open</div>
<div class="t" style="left:786.7px;top:187.8px;font-size:12px;line-height:12px;color:#111;letter-spacing:-0.151px;">Directory</div>
<svg style="position:absolute;left:856px;top:120px;" width="54" height="50" viewBox="0 0 54 50"><ellipse cx="30" cy="46" rx="20" ry="2" fill="#c9d6e6" opacity="0.7"/><path d="M28.3,12.5 H38.5 V20 M38.5,37.7 V44 H25 M16.5,28.6 V23" stroke="#2b8fb8" stroke-width="1.1" fill="none"/><polygon points="36,18.5 41,18.5 38.5,21.5" fill="#1d7ca0"/><polygon points="27,41.5 27,46.5 24,44" fill="#1d7ca0"/><polygon points="14,24.5 19,24.5 16.5,21.5" fill="#1d7ca0"/><defs><linearGradient id="tg5" x1="0" y1="0" x2="0" y2="1"><stop offset="0" stop-color="#cdd3d7"/><stop offset="1" stop-color="#9ea6ab"/></linearGradient></defs><rect x="11.1" y="5.7" width="17.2" height="16.9" rx="1.23" fill="url(#tg5)"/><rect x="12.78" y="9.38" width="2.91" height="1.43" fill="#2a9ad0"/><rect x="16.39" y="9.38" width="2.91" height="1.43" fill="#2a9ad0"/><rect x="20.00" y="9.38" width="2.91" height="1.43" fill="#2a9ad0"/><rect x="23.61" y="9.38" width="2.91" height="1.43" fill="#2a9ad0"/><rect x="12.78" y="11.41" width="2.91" height="1.43" fill="#2a8ccc"/><rect x="16.39" y="11.41" width="2.91" height="1.43" fill="#ffffff"/><rect x="20.00" y="11.41" width="2.91" height="1.43" fill="#ffffff"/><rect x="23.61" y="11.41" width="2.91" height="1.43" fill="#ffffff"/><rect x="12.78" y="13.44" width="2.91" height="1.43" fill="#2a8ccc"/><rect x="16.39" y="13.44" width="2.91" height="1.43" fill="#e9ebec"/><rect x="20.00" y="13.44" width="2.91" height="1.43" fill="#e9ebec"/><rect x="23.61" y="13.44" width="2.91" height="1.43" fill="#e9ebec"/><rect x="12.78" y="15.46" width="2.91" height="1.43" fill="#1f6fc2"/><rect x="16.39" y="15.46" width="2.91" height="1.43" fill="#e9ebec"/><rect x="20.00" y="15.46" width="2.91" height="1.43" fill="#e9ebec"/><rect x="23.61" y="15.46" width="2.91" height="1.43" fill="#e9ebec"/><rect x="12.78" y="17.49" width="2.91" height="1.43" fill="#1f6fc2"/><rect x="16.39" y="17.49" width="2.91" height="1.43" fill="#e9ebec"/><rect x="20.00" y="17.49" width="2.91" height="1.43" fill="#e9ebec"/><rect x="23.61" y="17.49" width="2.91" height="1.43" fill="#e9ebec"/><rect x="12.78" y="19.52" width="2.91" height="1.43" fill="#1f6fc2"/><rect x="16.39" y="19.52" width="2.91" height="1.43" fill="#e9ebec"/><rect x="20.00" y="19.52" width="2.91" height="1.43" fill="#e9ebec"/><rect x="23.61" y="19.52" width="2.91" height="1.43" fill="#e9ebec"/><defs><linearGradient id="tg6" x1="0" y1="0" x2="0" y2="1"><stop offset="0" stop-color="#cdd3d7"/><stop offset="1" stop-color="#9ea6ab"/></linearGradient></defs><rect x="7" y="28.6" width="17.2" height="17.2" rx="1.23" fill="url(#tg6)"/><rect x="8.68" y="32.34" width="2.91" height="1.46" fill="#2a9ad0"/><rect x="12.29" y="32.34" width="2.91" height="1.46" fill="#2a9ad0"/><rect x="15.90" y="32.34" width="2.91" height="1.46" fill="#2a9ad0"/><rect x="19.51" y="32.34" width="2.91" height="1.46" fill="#2a9ad0"/><rect x="8.68" y="34.40" width="2.91" height="1.46" fill="#2a8ccc"/><rect x="12.29" y="34.40" width="2.91" height="1.46" fill="#ffffff"/><rect x="15.90" y="34.40" width="2.91" height="1.46" fill="#ffffff"/><rect x="19.51" y="34.40" width="2.91" height="1.46" fill="#ffffff"/><rect x="8.68" y="36.47" width="2.91" height="1.46" fill="#2a8ccc"/><rect x="12.29" y="36.47" width="2.91" height="1.46" fill="#e9ebec"/><rect x="15.90" y="36.47" width="2.91" height="1.46" fill="#e9ebec"/><rect x="19.51" y="36.47" width="2.91" height="1.46" fill="#e9ebec"/><rect x="8.68" y="38.53" width="2.91" height="1.46" fill="#1f6fc2"/><rect x="12.29" y="38.53" width="2.91" height="1.46" fill="#e9ebec"/><rect x="15.90" y="38.53" width="2.91" height="1.46" fill="#e9ebec"/><rect x="19.51" y="38.53" width="2.91" height="1.46" fill="#e9ebec"/><rect x="8.68" y="40.60" width="2.91" height="1.46" fill="#1f6fc2"/><rect x="12.29" y="40.60" width="2.91" height="1.46" fill="#e9ebec"/><rect x="15.90" y="40.60" width="2.91" height="1.46" fill="#e9ebec"/><rect x="19.51" y="40.60" width="2.91" height="1.46" fill="#e9ebec"/><rect x="8.68" y="42.66" width="2.91" height="1.46" fill="#1f6fc2"/><rect x="12.29" y="42.66" width="2.91" height="1.46" fill="#e9ebec"/><rect x="15.90" y="42.66" width="2.91" height="1.46" fill="#e9ebec"/><rect x="19.51" y="42.66" width="2.91" height="1.46" fill="#e9ebec"/><defs><linearGradient id="tg7" x1="0" y1="0" x2="0" y2="1"><stop offset="0" stop-color="#cdd3d7"/><stop offset="1" stop-color="#9ea6ab"/></linearGradient></defs><rect x="30.3" y="20.9" width="16.8" height="16.8" rx="1.20" fill="url(#tg7)"/><rect x="31.94" y="24.56" width="2.83" height="1.42" fill="#2a9ad0"/><rect x="35.47" y="24.56" width="2.83" height="1.42" fill="#2a9ad0"/><rect x="39.00" y="24.56" width="2.83" height="1.42" fill="#2a9ad0"/><rect x="42.53" y="24.56" width="2.83" height="1.42" fill="#2a9ad0"/><rect x="31.94" y="26.58" width="2.83" height="1.42" fill="#2a8ccc"/><rect x="35.47" y="26.58" width="2.83" height="1.42" fill="#ffffff"/><rect x="39.00" y="26.58" width="2.83" height="1.42" fill="#ffffff"/><rect x="42.53" y="26.58" width="2.83" height="1.42" fill="#ffffff"/><rect x="31.94" y="28.59" width="2.83" height="1.42" fill="#2a8ccc"/><rect x="35.47" y="28.59" width="2.83" height="1.42" fill="#e9ebec"/><rect x="39.00" y="28.59" width="2.83" height="1.42" fill="#e9ebec"/><rect x="42.53" y="28.59" width="2.83" height="1.42" fill="#e9ebec"/><rect x="31.94" y="30.61" width="2.83" height="1.42" fill="#1f6fc2"/><rect x="35.47" y="30.61" width="2.83" height="1.42" fill="#e9ebec"/><rect x="39.00" y="30.61" width="2.83" height="1.42" fill="#e9ebec"/><rect x="42.53" y="30.61" width="2.83" height="1.42" fill="#e9ebec"/><rect x="31.94" y="32.62" width="2.83" height="1.42" fill="#1f6fc2"/><rect x="35.47" y="32.62" width="2.83" height="1.42" fill="#e9ebec"/><rect x="39.00" y="32.62" width="2.83" height="1.42" fill="#e9ebec"/><rect x="42.53" y="32.62" width="2.83" height="1.42" fill="#e9ebec"/><rect x="31.94" y="34.64" width="2.83" height="1.42" fill="#1f6fc2"/><rect x="35.47" y="34.64" width="2.83" height="1.42" fill="#e9ebec"/><rect x="39.00" y="34.64" width="2.83" height="1.42" fill="#e9ebec"/><rect x="42.53" y="34.64" width="2.83" height="1.42" fill="#e9ebec"/></svg>
<div class="t" style="left:849.1px;top:173.1px;font-size:12px;line-height:12px;color:#111;letter-spacing:0.068px;">Repopulate</div>
<div class="t" style="left:858px;top:187.8px;font-size:12px;line-height:12px;color:#111;letter-spacing:-0.171px;">All Tables</div>
<div style="position:absolute;left:85px;top:224px;width:948px;height:467px;background:#bedbfc;"></div>
<div style="position:absolute;left:85px;top:224px;width:330px;height:441px;background:#fff;border:1px solid #6f9bd6;box-sizing:border-box;"></div>
<div style="position:absolute;left:86px;top:225px;width:328px;height:24px;background:linear-gradient(#e6effc,#bdd6f5);border:1px solid #f5f9fe;border-bottom:1px solid #6f9bd6;box-sizing:border-box;"></div>
<div class="t" style="left:89.4px;top:230.3px;font-size:14px;line-height:14px;color:#15428b;font-weight:bold;letter-spacing:0.056px;">Connection</div>
<div style="position:absolute;left:90px;top:256px;width:320px;height:22px;background:#fff;border:1px solid #a5bfe0;box-sizing:border-box;"></div>
<div style="position:absolute;left:392px;top:258px;width:16px;height:18px;background:linear-gradient(#edf4fd,#c8dcf6);"></div>
<svg style="position:absolute;left:396px;top:263px;" width="9" height="6" viewBox="0 0 9 6"><polygon points="1.5,1 7.5,1 4.5,4.5" fill="#15428b"/></svg>
<div class="t" style="left:93.3px;top:262px;font-size:11px;line-height:11px;color:#111;letter-spacing:0.099px;">Show activated tables</div>
<div style="position:absolute;left:90px;top:277px;width:320px;height:319px;background:#fff;border:1px solid #7ea3d8;border-top:2px solid #7ea3d8;box-sizing:border-box;"></div>
<div style="position:absolute;left:392px;top:278px;width:17px;height:317px;background:#c9dcf3;"></div>
<svg style="position:absolute;left:396px;top:284px;" width="9" height="6" viewBox="0 0 9 6"><polygon points="0.5,5.5 8.5,5.5 4.5,0.5" fill="#4a5b78"/></svg>
<svg style="position:absolute;left:396px;top:583px;" width="9" height="6" viewBox="0 0 9 6"><polygon points="0.5,0.5 8.5,0.5 4.5,5.5" fill="#4a5b78"/></svg>
<div style="position:absolute;left:393px;top:309px;width:16px;height:21px;background:linear-gradient(90deg,#fff,#e4ecf8);border:1px solid #8eaedb;border-radius:2px;box-sizing:border-box;"></div>
<div style="position:absolute;left:397px;top:317px;width:8px;height:1px;background:#7a93bb;"></div>
<div style="position:absolute;left:397px;top:319px;width:8px;height:1px;background:#7a93bb;"></div>
<div style="position:absolute;left:397px;top:321px;width:8px;height:1px;background:#7a93bb;"></div>
<div style="position:absolute;left:91px;top:278px;width:301px;height:317px;overflow:hidden;">
<div style="position:absolute;left:0px;top:94px;width:301px;height:20px;background:linear-gradient(#fde6b0,#fbd47f);border-top:1px solid #f58a1f;border-bottom:1px solid #f58a1f;box-sizing:border-box;"></div>
<div style="position:absolute;left:10px;top:14px;width:1px;height:310px;background:repeating-linear-gradient(#888 0 1px,transparent 1px 2px);"></div>
<div style="position:absolute;left:30px;top:16px;width:1px;height:310px;background:repeating-linear-gradient(#888 0 1px,transparent 1px 2px);"></div>
<div style="position:absolute;left:16px;top:9px;width:5px;height:1px;background:repeating-linear-gradient(90deg,#888 0 1px,transparent 1px 2px);"></div>
<div style="position:absolute;left:31px;top:28px;width:10px;height:1px;background:repeating-linear-gradient(90deg,#888 0 1px,transparent 1px 2px);"></div>
<div style="position:absolute;left:41px;top:22px;width:13px;height:13px;background:linear-gradient(135deg,#e3e6ec,#f8f9fb);border:1px solid #1d5089;box-sizing:border-box;"></div>
<svg style="position:absolute;left:57px;top:21px" width="14" height="13" viewBox="0 0 14 13"><rect x="0" y="0" width="14" height="13" fill="#7f90ad"/><rect x="1" y="3" width="12" height="9" fill="#f6f8fb"/><path d="M5,3 V12 M9,3 V12 M1,6 H13 M1,9 H13" stroke="#d3dae6" stroke-width="0.8"/><rect x="0" y="0" width="14" height="3" fill="#4a7de0"/><rect x="1" y="1" width="12" height="1" fill="#93b3f2"/><rect x="0" y="12" width="14" height="1" fill="#33466b"/><path d="M2.3,8.2 L5,10.8 L10.8,4.4" stroke="#0a7a0a" stroke-width="2.8" fill="none" opacity="0.55"/><path d="M2.3,8.2 L5,10.8 L10.8,4.4" stroke="#22d322" stroke-width="1.8" fill="none"/></svg>
<div class="t" style="left:75px;top:22px;font-size:12px;line-height:12px;color:#111;transform:scaleX(0.882);transform-origin:0 0;">API_HISTORY__BATCH</div>
<div style="position:absolute;left:31px;top:47px;width:10px;height:1px;background:repeating-linear-gradient(90deg,#888 0 1px,transparent 1px 2px);"></div>
<div style="position:absolute;left:41px;top:41px;width:13px;height:13px;background:linear-gradient(135deg,#e3e6ec,#f8f9fb);border:1px solid #1d5089;box-sizing:border-box;"></div>
<svg style="position:absolute;left:57px;top:40px" width="14" height="13" viewBox="0 0 14 13"><rect x="0" y="0" width="14" height="13" fill="#7f90ad"/><rect x="1" y="3" width="12" height="9" fill="#f6f8fb"/><path d="M5,3 V12 M9,3 V12 M1,6 H13 M1,9 H13" stroke="#d3dae6" stroke-width="0.8"/><rect x="0" y="0" width="14" height="3" fill="#4a7de0"/><rect x="1" y="1" width="12" height="1" fill="#93b3f2"/><rect x="0" y="12" width="14" height="1" fill="#33466b"/><path d="M2.3,8.2 L5,10.8 L10.8,4.4" stroke="#0a7a0a" stroke-width="2.8" fill="none" opacity="0.55"/><path d="M2.3,8.2 L5,10.8 L10.8,4.4" stroke="#22d322" stroke-width="1.8" fill="none"/></svg>
<div class="t" style="left:75px;top:41px;font-size:12px;line-height:12px;color:#111;transform:scaleX(0.882);transform-origin:0 0;">API_HISTORY__CHECK</div>
<div style="position:absolute;left:31px;top:66px;width:10px;height:1px;background:repeating-linear-gradient(90deg,#888 0 1px,transparent 1px 2px);"></div>
<div style="position:absolute;left:41px;top:60px;width:13px;height:13px;background:linear-gradient(135deg,#e3e6ec,#f8f9fb);border:1px solid #1d5089;box-sizing:border-box;"></div>
<svg style="position:absolute;left:57px;top:59px" width="14" height="13" viewBox="0 0 14 13"><rect x="0" y="0" width="14" height="13" fill="#7f90ad"/><rect x="1" y="3" width="12" height="9" fill="#f6f8fb"/><path d="M5,3 V12 M9,3 V12 M1,6 H13 M1,9 H13" stroke="#d3dae6" stroke-width="0.8"/><rect x="0" y="0" width="14" height="3" fill="#4a7de0"/><rect x="1" y="1" width="12" height="1" fill="#93b3f2"/><rect x="0" y="12" width="14" height="1" fill="#33466b"/><path d="M2.3,8.2 L5,10.8 L10.8,4.4" stroke="#0a7a0a" stroke-width="2.8" fill="none" opacity="0.55"/><path d="M2.3,8.2 L5,10.8 L10.8,4.4" stroke="#22d322" stroke-width="1.8" fill="none"/></svg>
<div class="t" style="left:75px;top:60px;font-size:12px;line-height:12px;color:#111;transform:scaleX(0.882);transform-origin:0 0;">API_HISTORY__CREDIT_CARD_PAYMENT</div>
<div style="position:absolute;left:31px;top:85px;width:10px;height:1px;background:repeating-linear-gradient(90deg,#888 0 1px,transparent 1px 2px);"></div>
<div style="position:absolute;left:41px;top:79px;width:13px;height:13px;background:linear-gradient(135deg,#e3e6ec,#f8f9fb);border:1px solid #1d5089;box-sizing:border-box;"></div>
<svg style="position:absolute;left:57px;top:78px" width="14" height="13" viewBox="0 0 14 13"><rect x="0" y="0" width="14" height="13" fill="#7f90ad"/><rect x="1" y="3" width="12" height="9" fill="#f6f8fb"/><path d="M5,3 V12 M9,3 V12 M1,6 H13 M1,9 H13" stroke="#d3dae6" stroke-width="0.8"/><rect x="0" y="0" width="14" height="3" fill="#4a7de0"/><rect x="1" y="1" width="12" height="1" fill="#93b3f2"/><rect x="0" y="12" width="14" height="1" fill="#33466b"/><path d="M2.3,8.2 L5,10.8 L10.8,4.4" stroke="#0a7a0a" stroke-width="2.8" fill="none" opacity="0.55"/><path d="M2.3,8.2 L5,10.8 L10.8,4.4" stroke="#22d322" stroke-width="1.8" fill="none"/></svg>
<div class="t" style="left:75px;top:79px;font-size:12px;line-height:12px;color:#111;transform:scaleX(0.882);transform-origin:0 0;">API_HISTORY__DIST_PAYMENT</div>
<div style="position:absolute;left:31px;top:104px;width:10px;height:1px;background:repeating-linear-gradient(90deg,#888 0 1px,transparent 1px 2px);"></div>
<div style="position:absolute;left:41px;top:98px;width:13px;height:13px;background:linear-gradient(135deg,#e3e6ec,#f8f9fb);border:1px solid #1d5089;box-sizing:border-box;"></div>
<svg style="position:absolute;left:57px;top:97px" width="14" height="13" viewBox="0 0 14 13"><rect x="0" y="0" width="14" height="13" fill="#7f90ad"/><rect x="1" y="3" width="12" height="9" fill="#f6f8fb"/><path d="M5,3 V12 M9,3 V12 M1,6 H13 M1,9 H13" stroke="#d3dae6" stroke-width="0.8"/><rect x="0" y="0" width="14" height="3" fill="#4a7de0"/><rect x="1" y="1" width="12" height="1" fill="#93b3f2"/><rect x="0" y="12" width="14" height="1" fill="#33466b"/><path d="M2.3,8.2 L5,10.8 L10.8,4.4" stroke="#0a7a0a" stroke-width="2.8" fill="none" opacity="0.55"/><path d="M2.3,8.2 L5,10.8 L10.8,4.4" stroke="#22d322" stroke-width="1.8" fill="none"/></svg>
<div class="t" style="left:75px;top:98px;font-size:12px;line-height:12px;color:#111;transform:scaleX(0.882);transform-origin:0 0;">API_HISTORY__DISTRIBUTION</div>
<div style="position:absolute;left:31px;top:123px;width:10px;height:1px;background:repeating-linear-gradient(90deg,#888 0 1px,transparent 1px 2px);"></div>
<div style="position:absolute;left:41px;top:117px;width:13px;height:13px;background:linear-gradient(135deg,#e3e6ec,#f8f9fb);border:1px solid #1d5089;box-sizing:border-box;"></div>
<svg style="position:absolute;left:57px;top:116px" width="14" height="13" viewBox="0 0 14 13"><rect x="0" y="0" width="14" height="13" fill="#7f90ad"/><rect x="1" y="3" width="12" height="9" fill="#f6f8fb"/><path d="M5,3 V12 M9,3 V12 M1,6 H13 M1,9 H13" stroke="#d3dae6" stroke-width="0.8"/><rect x="0" y="0" width="14" height="3" fill="#4a7de0"/><rect x="1" y="1" width="12" height="1" fill="#93b3f2"/><rect x="0" y="12" width="14" height="1" fill="#33466b"/><path d="M2.3,8.2 L5,10.8 L10.8,4.4" stroke="#0a7a0a" stroke-width="2.8" fill="none" opacity="0.55"/><path d="M2.3,8.2 L5,10.8 L10.8,4.4" stroke="#22d322" stroke-width="1.8" fill="none"/></svg>
<div class="t" style="left:75px;top:117px;font-size:12px;line-height:12px;color:#111;transform:scaleX(0.882);transform-origin:0 0;">API_HISTORY__ELECTRONIC_PAYMENT</div>
<div style="position:absolute;left:31px;top:142px;width:10px;height:1px;background:repeating-linear-gradient(90deg,#888 0 1px,transparent 1px 2px);"></div>
<div style="position:absolute;left:41px;top:136px;width:13px;height:13px;background:linear-gradient(135deg,#e3e6ec,#f8f9fb);border:1px solid #1d5089;box-sizing:border-box;"></div>
<svg style="position:absolute;left:57px;top:135px" width="14" height="13" viewBox="0 0 14 13"><rect x="0" y="0" width="14" height="13" fill="#7f90ad"/><rect x="1" y="3" width="12" height="9" fill="#f6f8fb"/><path d="M5,3 V12 M9,3 V12 M1,6 H13 M1,9 H13" stroke="#d3dae6" stroke-width="0.8"/><rect x="0" y="0" width="14" height="3" fill="#4a7de0"/><rect x="1" y="1" width="12" height="1" fill="#93b3f2"/><rect x="0" y="12" width="14" height="1" fill="#33466b"/><path d="M2.3,8.2 L5,10.8 L10.8,4.4" stroke="#0a7a0a" stroke-width="2.8" fill="none" opacity="0.55"/><path d="M2.3,8.2 L5,10.8 L10.8,4.4" stroke="#22d322" stroke-width="1.8" fill="none"/></svg>
<div class="t" style="left:75px;top:136px;font-size:12px;line-height:12px;color:#111;transform:scaleX(0.882);transform-origin:0 0;">API_HISTORY__INVOICE</div>
<div style="position:absolute;left:31px;top:161px;width:10px;height:1px;background:repeating-linear-gradient(90deg,#888 0 1px,transparent 1px 2px);"></div>
<div style="position:absolute;left:41px;top:155px;width:13px;height:13px;background:linear-gradient(135deg,#e3e6ec,#f8f9fb);border:1px solid #1d5089;box-sizing:border-box;"></div>
<svg style="position:absolute;left:57px;top:154px" width="14" height="13" viewBox="0 0 14 13"><rect x="0" y="0" width="14" height="13" fill="#7f90ad"/><rect x="1" y="3" width="12" height="9" fill="#f6f8fb"/><path d="M5,3 V12 M9,3 V12 M1,6 H13 M1,9 H13" stroke="#d3dae6" stroke-width="0.8"/><rect x="0" y="0" width="14" height="3" fill="#4a7de0"/><rect x="1" y="1" width="12" height="1" fill="#93b3f2"/><rect x="0" y="12" width="14" height="1" fill="#33466b"/><path d="M2.3,8.2 L5,10.8 L10.8,4.4" stroke="#0a7a0a" stroke-width="2.8" fill="none" opacity="0.55"/><path d="M2.3,8.2 L5,10.8 L10.8,4.4" stroke="#22d322" stroke-width="1.8" fill="none"/></svg>
<div class="t" style="left:75px;top:155px;font-size:12px;line-height:12px;color:#111;transform:scaleX(0.882);transform-origin:0 0;">API_HISTORY__INVOICE_PAYMENT</div>
<div style="position:absolute;left:31px;top:180px;width:10px;height:1px;background:repeating-linear-gradient(90deg,#888 0 1px,transparent 1px 2px);"></div>
<div style="position:absolute;left:41px;top:174px;width:13px;height:13px;background:linear-gradient(135deg,#e3e6ec,#f8f9fb);border:1px solid #1d5089;box-sizing:border-box;"></div>
<svg style="position:absolute;left:57px;top:173px" width="14" height="13" viewBox="0 0 14 13"><rect x="0" y="0" width="14" height="13" fill="#7f90ad"/><rect x="1" y="3" width="12" height="9" fill="#f6f8fb"/><path d="M5,3 V12 M9,3 V12 M1,6 H13 M1,9 H13" stroke="#d3dae6" stroke-width="0.8"/><rect x="0" y="0" width="14" height="3" fill="#4a7de0"/><rect x="1" y="1" width="12" height="1" fill="#93b3f2"/><rect x="0" y="12" width="14" height="1" fill="#33466b"/><path d="M2.3,8.2 L5,10.8 L10.8,4.4" stroke="#0a7a0a" stroke-width="2.8" fill="none" opacity="0.55"/><path d="M2.3,8.2 L5,10.8 L10.8,4.4" stroke="#22d322" stroke-width="1.8" fill="none"/></svg>
<div class="t" style="left:75px;top:174px;font-size:12px;line-height:12px;color:#111;transform:scaleX(0.882);transform-origin:0 0;">API_HISTORY__SESSION</div>
<div style="position:absolute;left:31px;top:199px;width:10px;height:1px;background:repeating-linear-gradient(90deg,#888 0 1px,transparent 1px 2px);"></div>
<div style="position:absolute;left:41px;top:193px;width:13px;height:13px;background:linear-gradient(135deg,#e3e6ec,#f8f9fb);border:1px solid #1d5089;box-sizing:border-box;"></div>
<svg style="position:absolute;left:57px;top:192px" width="14" height="13" viewBox="0 0 14 13"><rect x="0" y="0" width="14" height="13" fill="#7f90ad"/><rect x="1" y="3" width="12" height="9" fill="#f6f8fb"/><path d="M5,3 V12 M9,3 V12 M1,6 H13 M1,9 H13" stroke="#d3dae6" stroke-width="0.8"/><rect x="0" y="0" width="14" height="3" fill="#4a7de0"/><rect x="1" y="1" width="12" height="1" fill="#93b3f2"/><rect x="0" y="12" width="14" height="1" fill="#33466b"/><path d="M2.3,8.2 L5,10.8 L10.8,4.4" stroke="#0a7a0a" stroke-width="2.8" fill="none" opacity="0.55"/><path d="M2.3,8.2 L5,10.8 L10.8,4.4" stroke="#22d322" stroke-width="1.8" fill="none"/></svg>
<div class="t" style="left:75px;top:193px;font-size:12px;line-height:12px;color:#111;transform:scaleX(0.882);transform-origin:0 0;">API_HISTORY__TAX_DIST_PAYMENT</div>
<div style="position:absolute;left:31px;top:218px;width:10px;height:1px;background:repeating-linear-gradient(90deg,#888 0 1px,transparent 1px 2px);"></div>
<div style="position:absolute;left:41px;top:212px;width:13px;height:13px;background:linear-gradient(135deg,#e3e6ec,#f8f9fb);border:1px solid #1d5089;box-sizing:border-box;"></div>
<svg style="position:absolute;left:57px;top:211px" width="14" height="13" viewBox="0 0 14 13"><rect x="0" y="0" width="14" height="13" fill="#7f90ad"/><rect x="1" y="3" width="12" height="9" fill="#f6f8fb"/><path d="M5,3 V12 M9,3 V12 M1,6 H13 M1,9 H13" stroke="#d3dae6" stroke-width="0.8"/><rect x="0" y="0" width="14" height="3" fill="#4a7de0"/><rect x="1" y="1" width="12" height="1" fill="#93b3f2"/><rect x="0" y="12" width="14" height="1" fill="#33466b"/><path d="M2.3,8.2 L5,10.8 L10.8,4.4" stroke="#0a7a0a" stroke-width="2.8" fill="none" opacity="0.55"/><path d="M2.3,8.2 L5,10.8 L10.8,4.4" stroke="#22d322" stroke-width="1.8" fill="none"/></svg>
<div class="t" style="left:75px;top:212px;font-size:12px;line-height:12px;color:#111;transform:scaleX(0.882);transform-origin:0 0;">API_HISTORY__TAX_DISTRIBUTION</div>
<div style="position:absolute;left:31px;top:237px;width:10px;height:1px;background:repeating-linear-gradient(90deg,#888 0 1px,transparent 1px 2px);"></div>
<div style="position:absolute;left:41px;top:231px;width:13px;height:13px;background:linear-gradient(135deg,#e3e6ec,#f8f9fb);border:1px solid #1d5089;box-sizing:border-box;"></div>
<svg style="position:absolute;left:57px;top:230px" width="14" height="13" viewBox="0 0 14 13"><rect x="0" y="0" width="14" height="13" fill="#7f90ad"/><rect x="1" y="3" width="12" height="9" fill="#f6f8fb"/><path d="M5,3 V12 M9,3 V12 M1,6 H13 M1,9 H13" stroke="#d3dae6" stroke-width="0.8"/><rect x="0" y="0" width="14" height="3" fill="#4a7de0"/><rect x="1" y="1" width="12" height="1" fill="#93b3f2"/><rect x="0" y="12" width="14" height="1" fill="#33466b"/><path d="M2.3,8.2 L5,10.8 L10.8,4.4" stroke="#0a7a0a" stroke-width="2.8" fill="none" opacity="0.55"/><path d="M2.3,8.2 L5,10.8 L10.8,4.4" stroke="#22d322" stroke-width="1.8" fill="none"/></svg>
<div class="t" style="left:75px;top:231px;font-size:12px;line-height:12px;color:#111;transform:scaleX(0.882);transform-origin:0 0;">APM_MASTER__BATCH</div>
<div style="position:absolute;left:31px;top:256px;width:10px;height:1px;background:repeating-linear-gradient(90deg,#888 0 1px,transparent 1px 2px);"></div>
<div style="position:absolute;left:41px;top:250px;width:13px;height:13px;background:linear-gradient(135deg,#e3e6ec,#f8f9fb);border:1px solid #1d5089;box-sizing:border-box;"></div>
<svg style="position:absolute;left:57px;top:249px" width="14" height="13" viewBox="0 0 14 13"><rect x="0" y="0" width="14" height="13" fill="#7f90ad"/><rect x="1" y="3" width="12" height="9" fill="#f6f8fb"/><path d="M5,3 V12 M9,3 V12 M1,6 H13 M1,9 H13" stroke="#d3dae6" stroke-width="0.8"/><rect x="0" y="0" width="14" height="3" fill="#4a7de0"/><rect x="1" y="1" width="12" height="1" fill="#93b3f2"/><rect x="0" y="12" width="14" height="1" fill="#33466b"/><path d="M2.3,8.2 L5,10.8 L10.8,4.4" stroke="#0a7a0a" stroke-width="2.8" fill="none" opacity="0.55"/><path d="M2.3,8.2 L5,10.8 L10.8,4.4" stroke="#22d322" stroke-width="1.8" fill="none"/></svg>
<div class="t" style="left:75px;top:250px;font-size:12px;line-height:12px;color:#111;transform:scaleX(0.882);transform-origin:0 0;">APM_MASTER__CHECK</div>
<div style="position:absolute;left:31px;top:275px;width:10px;height:1px;background:repeating-linear-gradient(90deg,#888 0 1px,transparent 1px 2px);"></div>
<div style="position:absolute;left:41px;top:269px;width:13px;height:13px;background:linear-gradient(135deg,#e3e6ec,#f8f9fb);border:1px solid #1d5089;box-sizing:border-box;"></div>
<svg style="position:absolute;left:57px;top:268px" width="14" height="13" viewBox="0 0 14 13"><rect x="0" y="0" width="14" height="13" fill="#7f90ad"/><rect x="1" y="3" width="12" height="9" fill="#f6f8fb"/><path d="M5,3 V12 M9,3 V12 M1,6 H13 M1,9 H13" stroke="#d3dae6" stroke-width="0.8"/><rect x="0" y="0" width="14" height="3" fill="#4a7de0"/><rect x="1" y="1" width="12" height="1" fill="#93b3f2"/><rect x="0" y="12" width="14" height="1" fill="#33466b"/><path d="M2.3,8.2 L5,10.8 L10.8,4.4" stroke="#0a7a0a" stroke-width="2.8" fill="none" opacity="0.55"/><path d="M2.3,8.2 L5,10.8 L10.8,4.4" stroke="#22d322" stroke-width="1.8" fill="none"/></svg>
<div class="t" style="left:75px;top:269px;font-size:12px;line-height:12px;color:#111;transform:scaleX(0.882);transform-origin:0 0;">APM_MASTER__DIST_PAYMENT</div>
<div style="position:absolute;left:31px;top:294px;width:10px;height:1px;background:repeating-linear-gradient(90deg,#888 0 1px,transparent 1px 2px);"></div>
<div style="position:absolute;left:41px;top:288px;width:13px;height:13px;background:linear-gradient(135deg,#e3e6ec,#f8f9fb);border:1px solid #1d5089;box-sizing:border-box;"></div>
<svg style="position:absolute;left:57px;top:287px" width="14" height="13" viewBox="0 0 14 13"><rect x="0" y="0" width="14" height="13" fill="#7f90ad"/><rect x="1" y="3" width="12" height="9" fill="#f6f8fb"/><path d="M5,3 V12 M9,3 V12 M1,6 H13 M1,9 H13" stroke="#d3dae6" stroke-width="0.8"/><rect x="0" y="0" width="14" height="3" fill="#4a7de0"/><rect x="1" y="1" width="12" height="1" fill="#93b3f2"/><rect x="0" y="12" width="14" height="1" fill="#33466b"/><path d="M2.3,8.2 L5,10.8 L10.8,4.4" stroke="#0a7a0a" stroke-width="2.8" fill="none" opacity="0.55"/><path d="M2.3,8.2 L5,10.8 L10.8,4.4" stroke="#22d322" stroke-width="1.8" fill="none"/></svg>
<div class="t" style="left:75px;top:288px;font-size:12px;line-height:12px;color:#111;transform:scaleX(0.882);transform-origin:0 0;">APM_MASTER__DISTRIBUTION</div>
<div style="position:absolute;left:31px;top:313px;width:10px;height:1px;background:repeating-linear-gradient(90deg,#888 0 1px,transparent 1px 2px);"></div>
<div style="position:absolute;left:41px;top:307px;width:13px;height:13px;background:linear-gradient(135deg,#e3e6ec,#f8f9fb);border:1px solid #1d5089;box-sizing:border-box;"></div>
<svg style="position:absolute;left:57px;top:306px" width="14" height="13" viewBox="0 0 14 13"><rect x="0" y="0" width="14" height="13" fill="#7f90ad"/><rect x="1" y="3" width="12" height="9" fill="#f6f8fb"/><path d="M5,3 V12 M9,3 V12 M1,6 H13 M1,9 H13" stroke="#d3dae6" stroke-width="0.8"/><rect x="0" y="0" width="14" height="3" fill="#4a7de0"/><rect x="1" y="1" width="12" height="1" fill="#93b3f2"/><rect x="0" y="12" width="14" height="1" fill="#33466b"/><path d="M2.3,8.2 L5,10.8 L10.8,4.4" stroke="#0a7a0a" stroke-width="2.8" fill="none" opacity="0.55"/><path d="M2.3,8.2 L5,10.8 L10.8,4.4" stroke="#22d322" stroke-width="1.8" fill="none"/></svg>
<div class="t" style="left:75px;top:307px;font-size:12px;line-height:12px;color:#111;transform:scaleX(0.882);transform-origin:0 0;">APM_MASTER__INVOICE</div>
<div style="position:absolute;left:6px;top:5px;width:9px;height:9px;background:#fff;border:1px solid #3a4a66;box-sizing:border-box;"></div>
<div style="position:absolute;left:8px;top:9px;width:5px;height:1px;background:#222;"></div>
<div style="position:absolute;left:21px;top:3px;width:13px;height:13px;background:linear-gradient(135deg,#e1e5ec,#f4f6f9);border:1px solid #1d5089;box-shadow:inset 0 0 0 1px #fff;box-sizing:border-box;"></div>
<svg style="position:absolute;left:38px;top:1px" width="13" height="16" viewBox="0 0 13 16"><defs><linearGradient id="cyl" x1="0" x2="1"><stop offset="0" stop-color="#c9961a"/><stop offset="0.4" stop-color="#f7dc6a"/><stop offset="1" stop-color="#c8961c"/></linearGradient></defs><path d="M1,3 V13 A5.5,2.5 0 0 0 12,13 V3 Z" fill="url(#cyl)"/><ellipse cx="6.5" cy="3" rx="5.5" ry="2.3" fill="#fbe98a" stroke="#c8961c" stroke-width="0.6"/></svg>
<div class="t" style="left:55.400000000000006px;top:3px;font-size:12px;line-height:12px;color:#111;transform:scaleX(0.9);transform-origin:0 0;">ANTERRAPM</div>
</div>
<div style="position:absolute;left:86px;top:602px;width:328px;height:1px;background:#6f9bd6;"></div>
<div style="position:absolute;left:86px;top:603px;width:328px;height:31px;background:linear-gradient(#fcd6a4 0%,#fbb871 35%,#f9a43a 45%,#fbc85a 80%,#fde38a 100%);border-bottom:1px solid #8fb0de;box-sizing:border-box;"></div>
<div class="t" style="left:92.3px;top:612.5px;font-size:12px;line-height:12px;color:#1f3b73;font-weight:bold;transform:scaleX(0.9016);transform-origin:0 0;">Connection</div>
<div style="position:absolute;left:86px;top:634px;width:328px;height:30px;background:linear-gradient(#e4effc 0%,#cfe2fa 40%,#b4d4f9 42%,#b5d4f9 100%);"></div>
<div class="t" style="left:92.3px;top:643.5px;font-size:12px;line-height:12px;color:#1f3b73;font-weight:bold;transform:scaleX(0.9105);transform-origin:0 0;">Table Groupings</div>
<div style="position:absolute;left:415px;top:224px;width:4px;height:441px;background:#eeeff2;"></div>
<div style="position:absolute;left:424px;top:229px;width:603px;height:430px;box-sizing:border-box;border:1px solid #6f9bd6;border-radius:4px;background:#bedbfc;"></div>
<div style="position:absolute;left:425px;top:230px;width:601px;height:428px;box-sizing:border-box;border:4px solid #e8f0fa;border-radius:3px;"></div>
<div style="position:absolute;left:429px;top:241px;width:593px;height:77px;box-sizing:border-box;border:1px solid #d2dce7;border-radius:2px;"></div>
<div style="position:absolute;left:430px;top:242px;width:591px;height:76px;box-sizing:border-box;border:1px solid #fdfeff;border-radius:2px;"></div>
<div style="position:absolute;left:435px;top:235px;width:75px;height:10px;background:#bedbfc;"></div>
<div class="t" style="left:438px;top:235.8px;font-size:11px;line-height:11px;color:#111;letter-spacing:0.311px;">Table Options</div>
<div style="position:absolute;left:429px;top:325px;width:593px;height:329px;box-sizing:border-box;border:1px solid #d2dce7;border-radius:2px;"></div>
<div style="position:absolute;left:430px;top:326px;width:591px;height:328px;box-sizing:border-box;border:1px solid #fdfeff;border-radius:2px;"></div>
<div style="position:absolute;left:435px;top:319px;width:65px;height:10px;background:#bedbfc;"></div>
<div class="t" style="left:438.2px;top:320.3px;font-size:11px;line-height:11px;color:#111;letter-spacing:0.068px;">Last Update</div>
<div class="t" style="left:436.4px;top:256.7px;font-size:11px;line-height:11px;color:#111;letter-spacing:0.125px;">Table Name:</div>
<div style="position:absolute;left:507px;top:248px;width:430px;height:20px;background:#f4f4f4;border:1px solid #9fbfe8;box-sizing:border-box;"></div>
<div class="t" style="left:510.3px;top:252.8px;font-size:11px;line-height:11px;color:#111;letter-spacing:-0.696px;">API_HISTORY__DISTRIBUTION</div>
<div style="position:absolute;left:510px;top:273px;width:13px;height:13px;background:linear-gradient(135deg,#dde1e8,#f6f8fb);border:1px solid #1d5089;box-shadow:inset 0 0 0 1px #fff;box-sizing:border-box;"></div>
<svg style="position:absolute;left:512px;top:276px;" width="10" height="8" viewBox="0 0 10 8"><path d="M1,4 L3.5,6.8 L8.5,1" stroke="#2fa72a" stroke-width="2" fill="none"/></svg>
<div class="t" style="left:526.1px;top:273.9px;font-size:11px;line-height:11px;color:#1d3a84;letter-spacing:0.166px;">Active for update</div>
<div style="position:absolute;left:510px;top:297px;width:13px;height:13px;background:linear-gradient(135deg,#dde1e8,#f6f8fb);border:1px solid #1d5089;box-shadow:inset 0 0 0 1px #fff;box-sizing:border-box;"></div>
<div class="t" style="left:526.1px;top:297.7px;font-size:11px;line-height:11px;color:#1d3a84;letter-spacing:0.232px;">Do not use direct connection update</div>
<div style="position:absolute;left:753px;top:273px;width:13px;height:13px;background:linear-gradient(135deg,#dde1e8,#f6f8fb);border:1px solid #1d5089;box-shadow:inset 0 0 0 1px #fff;box-sizing:border-box;"></div>
<div class="t" style="left:769px;top:273.9px;font-size:11px;line-height:11px;color:#1d3a84;letter-spacing:0.204px;">Repopulate on next update</div>
<div style="position:absolute;left:753px;top:297px;width:13px;height:13px;background:linear-gradient(135deg,#dde1e8,#f6f8fb);border:1px solid #1d5089;box-shadow:inset 0 0 0 1px #fff;box-sizing:border-box;"></div>
<div class="t" style="left:769px;top:297.7px;font-size:11px;line-height:11px;color:#1d3a84;letter-spacing:0.197px;">Always repopulate on update</div>
<div class="t" style="left:439.5px;top:342.2px;font-size:11px;line-height:11px;color:#111;letter-spacing:0.182px;">Start Time:</div>
<div style="position:absolute;left:505px;top:334px;width:183px;height:22px;background:#fff;border:1px solid #a8acb2;box-sizing:border-box;"></div>
<div class="t" style="left:508.5px;top:340.2px;font-size:11px;line-height:11px;color:#8a8a8a;letter-spacing:-0.145px;">Oct  07 2025  03:24:28 PM</div>
<svg style="position:absolute;left:660px;top:338px;" width="24" height="14" viewBox="0 0 24 14"><rect x="1.5" y="1.5" width="10" height="11" rx="1" fill="#f4f4f4" stroke="#6e6e6e" stroke-width="1"/><path d="M2,4 H11 M3.5,6.5 H10 M3.5,8.5 H10 M3.5,10.5 H10 M5,5 V12 M7,5 V12 M9,5 V12" stroke="#9a9a9a" stroke-width="0.8"/><polygon points="14.5,5 21.5,5 18,8.5" fill="#b5b5b5"/></svg>
<div class="t" style="left:440.5px;top:365.4px;font-size:11px;line-height:11px;color:#111;letter-spacing:0.060px;">End Time:</div>
<div style="position:absolute;left:505px;top:359px;width:183px;height:20px;background:#f4f4f4;border:1px solid #9fbfe8;box-sizing:border-box;"></div>
<div class="t" style="left:508.5px;top:364.1px;font-size:11px;line-height:11px;color:#111;letter-spacing:-0.105px;">Oct 07 2025  03:24:32 PM</div>
<div class="t" style="left:440.5px;top:389.9px;font-size:11px;line-height:11px;color:#111;letter-spacing:0.084px;">Source row count:</div>
<div style="position:absolute;left:557px;top:383px;width:131px;height:19px;background:#f4f4f4;border:1px solid #9fbfe8;box-sizing:border-box;"></div>
<div class="t" style="left:561px;top:387.3px;font-size:11px;line-height:11px;color:#111;letter-spacing:-0.491px;">1051</div>
<div class="t" style="left:440.5px;top:411.8px;font-size:11px;line-height:11px;color:#111;letter-spacing:0.151px;">Destination row count:</div>
<div style="position:absolute;left:557px;top:406px;width:131px;height:19px;background:#f4f4f4;border:1px solid #9fbfe8;box-sizing:border-box;"></div>
<div class="t" style="left:561px;top:410.5px;font-size:11px;line-height:11px;color:#111;letter-spacing:-0.491px;">1051</div>
<div class="t" style="left:441px;top:433.7px;font-size:11px;line-height:11px;color:#111;letter-spacing:0.104px;">Table Error:</div>
<div style="position:absolute;left:505px;top:434px;width:507px;height:206px;background:#f4f4f4;border:1px solid #9fbfe8;box-sizing:border-box;"></div>
<div class="t" style="left:730.3px;top:341.7px;font-size:11px;line-height:11px;color:#111;letter-spacing:0.113px;">Elapsed time:</div>
<div style="position:absolute;left:805px;top:334px;width:132px;height:20px;background:#f4f4f4;border:1px solid #9fbfe8;box-sizing:border-box;"></div>
<div class="t" style="left:808px;top:339.2px;font-size:11px;line-height:11px;color:#111;letter-spacing:-0.323px;">4 sec</div>
<div class="t" style="left:716.3px;top:389.2px;font-size:11px;line-height:11px;color:#111;letter-spacing:0.063px;">Variance count:</div>
<div style="position:absolute;left:805px;top:383px;width:132px;height:19px;background:#f4f4f4;border:1px solid #9fbfe8;box-sizing:border-box;"></div>
<div class="t" style="left:808px;top:387.6px;font-size:11px;line-height:11px;color:#111;letter-spacing:-0.118px;">0</div>
<svg style="position:absolute;left:686px;top:250px;" width="90" height="95" viewBox="0 0 90 95"><defs><filter id="sh2" x="-20%" y="-20%" width="140%" height="140%"><feGaussianBlur stdDeviation="1.5"/></filter></defs>
<g opacity="0.35" filter="url(#sh2)" transform="translate(1,2)">
<polygon points="7.9,20.6 30.3,21.8 31.2,11.5 59.3,27.6 29,40.6 30.3,28.5 7.9,29.7" fill="#000"/>
<polygon points="61.6,54.1 33.8,70.7 40.6,75.5 37.4,83.2 45.1,87.6 49.5,82 58,86.8" fill="#000"/></g>
<polygon points="7.9,20.6 30.3,21.8 31.2,11.5 59.3,27.6 29,40.6 30.3,28.5 7.9,29.7" fill="#283347"/>
<polygon points="61.6,54.1 33.8,70.7 40.6,75.5 37.4,83.2 45.1,87.6 49.5,82 58,86.8" fill="#283347"/></svg>
<div style="position:absolute;left:85px;top:665px;width:948px;height:26px;box-sizing:border-box;border:1px solid #f7fafe;border-right:none;border-radius:0 0 0 5px;background:#bedbfc;"></div>
<div style="position:absolute;left:89px;top:669px;width:160px;height:18px;border:1px solid #000;box-shadow:inset 0 0 0 1px #e6f1fd;box-sizing:border-box;"></div>
<div class="t" style="left:92px;top:672px;font-size:12px;line-height:12px;color:#111;letter-spacing:-1.043px;">ANTERRAPM</div>
<div style="position:absolute;left:251px;top:669px;width:100px;height:18px;border:1px solid #000;box-shadow:inset 0 0 0 1px #e6f1fd;box-sizing:border-box;"></div>
<div class="t" style="left:254px;top:672px;font-size:12px;line-height:12px;color:#111;letter-spacing:-0.425px;">178 Tables</div>
<div style="position:absolute;left:353px;top:669px;width:48px;height:18px;background:linear-gradient(#e6eaef,#d3d9e1);border:1px solid #a9c0de;border-radius:3px;box-sizing:border-box;"></div>
<div style="position:absolute;left:403px;top:669px;width:625px;height:18px;border:1px solid #000;box-shadow:inset 0 0 0 1px #e6f1fd;box-sizing:border-box;"></div>
<div class="t" style="left:406px;top:672px;font-size:12px;line-height:12px;color:#111;letter-spacing:-0.380px;">Save Table settings</div>
<svg style="position:absolute;left:0px;top:195px;" width="110" height="100" viewBox="0 0 110 100"><defs><filter id="sh" x="-20%" y="-20%" width="140%" height="140%"><feGaussianBlur stdDeviation="1.5"/></filter></defs>
<polygon points="9,21 15,14 77,69.3 85,61.5 97.5,90.5 65,83.5 70.7,77" fill="#000" opacity="0.45" filter="url(#sh)" transform="translate(1,2)"/>
<polygon points="9,21 15,14 77,69.3 85,61.5 97.5,90.5 65,83.5 70.7,77" fill="#f1b823"/></svg>
</body></html>
